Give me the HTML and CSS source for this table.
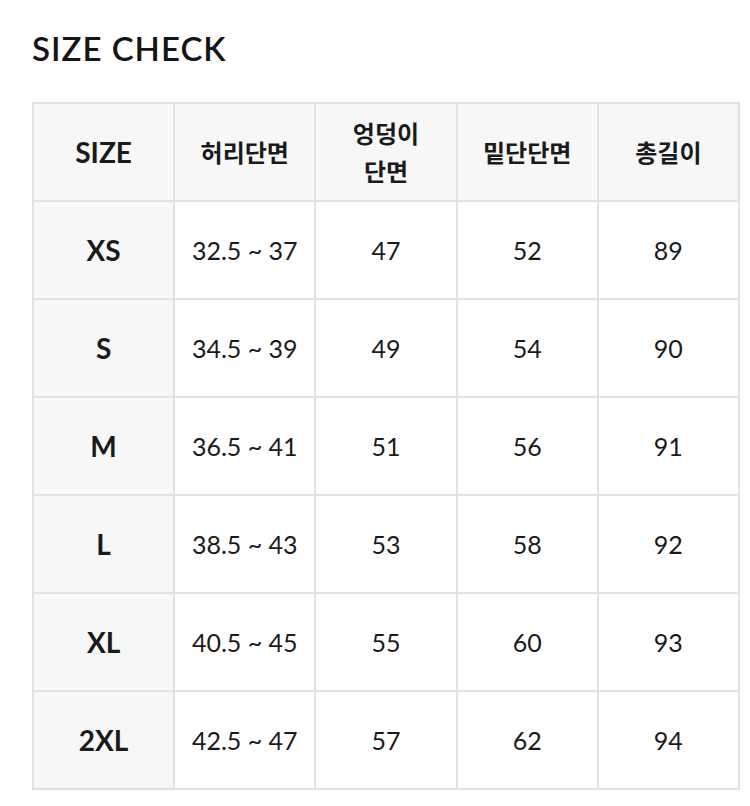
FILE: index.html
```html
<!DOCTYPE html>
<html lang="ko">
<head>
<meta charset="utf-8">
<title>SIZE CHECK</title>
<link rel="stylesheet" href="styles.css">
</head>
<body>
<main class="page">
  <h1 class="title">SIZE CHECK</h1>
  <table class="size-table">
    <thead>
      <tr>
        <th class="head">SIZE</th>
        <th class="head ko">허리단면</th>
        <th class="head ko">엉덩이<br>단면</th>
        <th class="head ko">밑단단면</th>
        <th class="head ko">총길이</th>
      </tr>
    </thead>
    <tbody>
      <tr><th class="size">XS</th><td>32.5 ~ 37</td><td>47</td><td>52</td><td>89</td></tr>
      <tr><th class="size">S</th><td>34.5 ~ 39</td><td>49</td><td>54</td><td>90</td></tr>
      <tr><th class="size">M</th><td>36.5 ~ 41</td><td>51</td><td>56</td><td>91</td></tr>
      <tr><th class="size">L</th><td>38.5 ~ 43</td><td>53</td><td>58</td><td>92</td></tr>
      <tr><th class="size">XL</th><td>40.5 ~ 45</td><td>55</td><td>60</td><td>93</td></tr>
      <tr><th class="size">2XL</th><td>42.5 ~ 47</td><td>57</td><td>62</td><td>94</td></tr>
    </tbody>
  </table>
</main>
</body>
</html>
```
FILE: styles.css
```css
html, body {
  margin: 0;
  padding: 0;
  background: #ffffff;
}
body {
  font-family: Lato, "Noto Sans CJK KR", sans-serif;
  color: #1e1e1e;
}
.page {
  padding: 28px 0 0 32px;
}
.title {
  margin: 0;
  font-family: Lato, sans-serif;
  font-weight: 600;
  font-size: 33px;
  line-height: 40px;
  letter-spacing: 1px;
  color: #151515;
}
.size-table {
  margin-top: 34px;
  width: 708px;
  border-collapse: collapse;
  table-layout: fixed;
}
.size-table th,
.size-table td {
  border: 2px solid #e2e2e2;
  height: 96px;
  padding: 0;
  text-align: center;
  vertical-align: middle;
  font-size: 25px;
}
.size-table td {
  font-weight: 400;
  background: #ffffff;
  color: #1a1a1a;
}
.head {
  background: #f7f7f7;
  font-weight: 700;
  line-height: 38px;
  color: #1a1a1a;
}
.size-table .head:first-child {
  font-size: 28px;
}
.size-table .head.ko {
  font-family: "Noto Sans CJK KR", sans-serif;
  font-size: 24px;
  font-weight: 700;
}
.size-table .size {
  background: #f7f7f7;
  font-weight: 700;
  font-size: 28px;
  color: #1a1a1a;
}
```
